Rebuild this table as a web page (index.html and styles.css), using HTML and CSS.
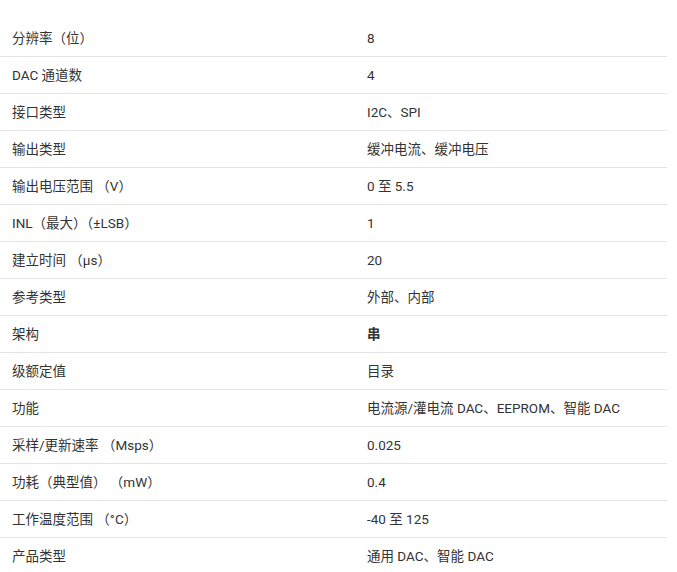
FILE: index.html
```html
<!DOCTYPE html>
<html lang="zh-CN">
<head>
<meta charset="utf-8">
<title>参数</title>
<link rel="stylesheet" href="styles.css">
</head>
<body>
<table class="spec">
<tbody>
<tr><td class="k">分辨率（位）</td><td class="v">8</td></tr>
<tr><td class="k">DAC 通道数</td><td class="v">4</td></tr>
<tr><td class="k">接口类型</td><td class="v">I2C、SPI</td></tr>
<tr><td class="k">输出类型</td><td class="v">缓冲电流、缓冲电压</td></tr>
<tr><td class="k">输出电压范围 （V）</td><td class="v">0 至 5.5</td></tr>
<tr><td class="k">INL（最大）（±LSB）</td><td class="v">1</td></tr>
<tr><td class="k">建立时间 （µs）</td><td class="v">20</td></tr>
<tr><td class="k">参考类型</td><td class="v">外部、内部</td></tr>
<tr><td class="k">架构</td><td class="v"><b>串</b></td></tr>
<tr><td class="k">级额定值</td><td class="v">目录</td></tr>
<tr><td class="k">功能</td><td class="v">电流源/灌电流 DAC、EEPROM、智能 DAC</td></tr>
<tr><td class="k">采样/更新速率 （Msps）</td><td class="v">0.025</td></tr>
<tr><td class="k">功耗（典型值） （mW）</td><td class="v">0.4</td></tr>
<tr><td class="k">工作温度范围 （°C）</td><td class="v">-40 至 125</td></tr>
<tr><td class="k">产品类型</td><td class="v">通用 DAC、智能 DAC</td></tr>
</tbody>
</table>
</body>
</html>
```
FILE: styles.css
```css
html, body {
  margin: 0;
  padding: 0;
  background: #fff;
}
body {
  padding-top: 20px;
  font-family: Roboto, "Noto Sans CJK SC", sans-serif;
  font-size: 13.5px;
  color: #333;
}
.spec {
  width: 667px;
  border-collapse: collapse;
}
.spec td {
  height: 36px;
  padding: 0 12px;
  border-bottom: 1px solid #e5e5e5;
  vertical-align: middle;
  line-height: 20px;
}
.spec td.k {
  width: 331px;
}
.spec b {
  font-weight: 700;
}
```
